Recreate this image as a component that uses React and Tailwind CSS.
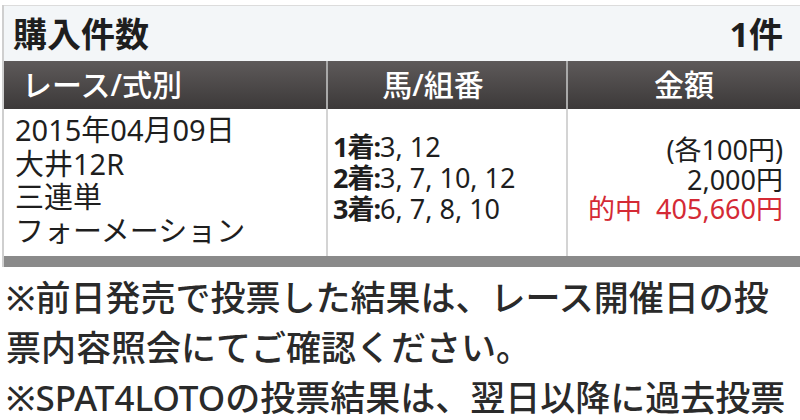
const FONT = { fontFamily: '"Noto Sans", "Noto Sans CJK JP", sans-serif' };

const MARKS = [
  { label: '1着:', nums: '3, 12' },
  { label: '2着:', nums: '3, 7, 10, 12' },
  { label: '3着:', nums: '6, 7, 8, 10' },
];

const NOTES = [
  '※前日発売で投票した結果は、レース開催日の投',
  '票内容照会にてご確認ください。',
  '※SPAT4LOTOの投票結果は、翌日以降に過去投票',
];

export default function App() {
  return (
    <div className="w-[800px] h-[420px] overflow-hidden bg-white text-[#1e1e1e]" style={FONT}>
      <div className="pt-[5px] pl-[2px]">
        <div className="border-l-2 border-[#cfcfcf]">
          {/* purchase count */}
          <div className="h-[56px] flex items-center justify-between pl-[9px] pr-[17px] bg-[#f3f6f8] border-t border-[#dcdcdc] text-[34px] font-bold leading-none">
            <span>購入件数</span>
            <span>1件</span>
          </div>

          {/* table header */}
          <div className="h-[48px] grid grid-cols-[322px_240px_1fr] bg-gradient-to-b from-[#5e5a5a] to-[#3c3939] text-white text-[30px] font-medium leading-none">
            <div className="flex items-center pl-[18px]">レース/式別</div>
            <div className="flex items-center justify-center border-l-2 border-[#a9a9a9] pr-[28px]">馬/組番</div>
            <div className="flex items-center justify-center border-l-2 border-[#a9a9a9]">金額</div>
          </div>

          {/* table body */}
          <div className="h-[147px] grid grid-cols-[322px_240px_1fr]">
            <div className="pl-[11px] pt-[4px] text-[29px] leading-[33.5px]">
              <div>2015年04月09日</div>
              <div>大井12R</div>
              <div>三連単</div>
              <div>フォーメーション</div>
            </div>
            <div className="border-l-2 border-[#d4d4d4] pl-[5px] pt-[22px] text-[27px] leading-[31px]">
              {MARKS.map((m) => (
                <div key={m.label} className="whitespace-nowrap">
                  <span className="font-bold tracking-[-1px]">{m.label}</span>
                  <span>{m.nums}</span>
                </div>
              ))}
            </div>
            <div className="border-l-2 border-[#d4d4d4] pr-[17px] pt-[26px] text-right text-[27px] leading-[29.5px]">
              <div>(各100円)</div>
              <div>2,000円</div>
              <div className="text-[#d42a35] whitespace-nowrap">的中&nbsp;&nbsp;405,660円</div>
            </div>
          </div>

          <div className="h-[11px] bg-[#8a8a8a]" />
        </div>
      </div>

      {/* notes */}
      <div className="pt-[6px] pl-[6px] text-[35px] leading-[50px] font-medium text-[#2a2a2a]">
        {NOTES.map((line) => (
          <div key={line} className="whitespace-nowrap">{line}</div>
        ))}
      </div>
    </div>
  );
}
